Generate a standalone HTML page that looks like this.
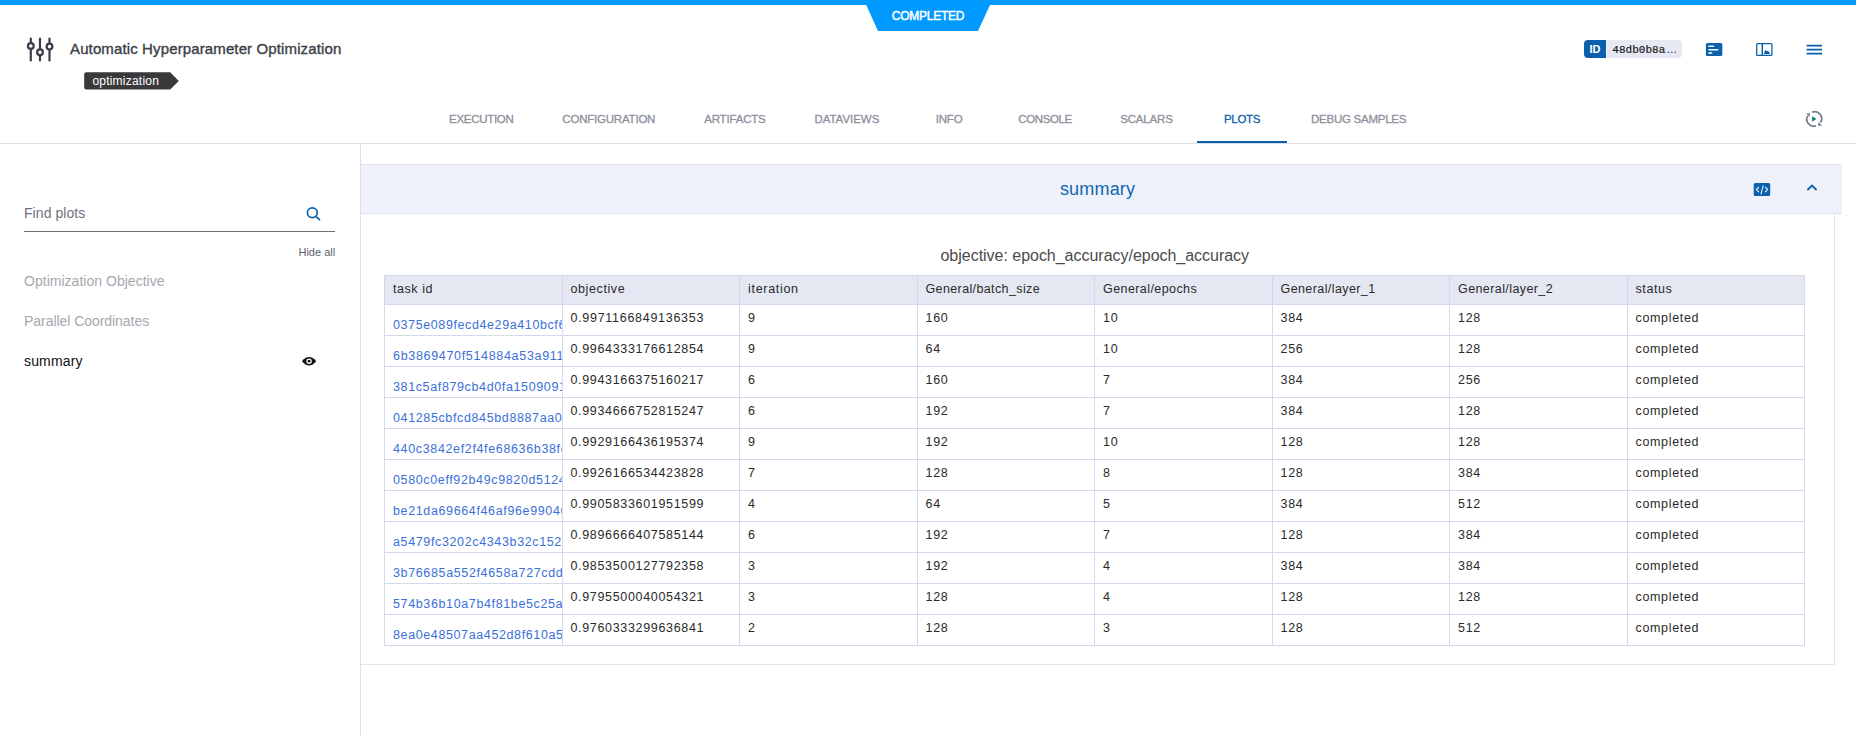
<!DOCTYPE html><html><head><meta charset="utf-8"><title>ClearML</title><style>
html,body{margin:0;padding:0;background:#fff}
body{width:1856px;height:736px;position:relative;overflow:hidden;font-family:"Liberation Sans",sans-serif}
.t{position:absolute;line-height:0;white-space:pre}
.t i{display:inline-block;height:30px;width:0}
.lk{overflow:hidden}
</style></head><body>
<div style="position:absolute;left:0;top:0;width:1856px;height:5px;background:#0099ff"></div>
<svg style="position:absolute;left:860px;top:0" width="140" height="34"><polygon points="6,4.5 130.2,4.5 118,31 18,31" fill="#0099ff"/></svg>
<svg style="position:absolute;left:22px;top:34px" width="36" height="32" viewBox="22 34 36 32" fill="none" stroke="#3a3e49" stroke-width="2.2" stroke-linecap="round">
<path d="M30.8 38.5V42.5M30.8 49.5V60.5M40 38.5V48.5M40 55.8V60.5M49.5 38.5V43M49.5 50.2V60.5"/>
<circle cx="30.8" cy="46" r="2.9"/><circle cx="40" cy="52.2" r="2.9"/><circle cx="49.5" cy="46.6" r="2.9"/></svg>
<svg style="position:absolute;left:80px;top:70px" width="104" height="22" viewBox="80 70 104 22"><path d="M86.2 72.2H170.2L178.8 80.9L170.2 89.6H86.2Q84.2 89.6 84.2 87.6V74.2Q84.2 72.2 86.2 72.2Z" fill="#3a3a3c"/></svg>
<svg style="position:absolute;left:1580px;top:36px" width="110" height="26" viewBox="1580 36 110 26"><path d="M1588 40H1606V58H1588Q1584 58 1584 54V44Q1584 40 1588 40Z" fill="#0a60ab"/><path d="M1606.5 40H1678Q1682 40 1682 44V54Q1682 58 1678 58H1606.5Z" fill="#e6e8f3"/></svg>
<svg style="position:absolute;left:1700px;top:38px" width="130" height="24" viewBox="1700 38 130 24">
<rect x="1705.9" y="43" width="16.4" height="13" rx="1.6" fill="#0a60ab"/>
<g stroke="#fff" stroke-width="1.5" stroke-linecap="round"><path d="M1708.9 46.3H1713.5M1708.9 49.8H1717.8M1708.9 53.1H1711.6"/></g>
<rect x="1756.7" y="43.7" width="15.2" height="11.6" rx="0.9" fill="none" stroke="#0a60ab" stroke-width="1.3"/>
<path d="M1762.3 43.7V55.3" stroke="#0a60ab" stroke-width="1.5"/>
<path d="M1764.2 54V52.2L1765.8 49.8L1767 51.6L1768 50.6L1769.8 53.2V54Z" fill="#0a60ab"/>
<g stroke="#0a60ab" stroke-width="1.6"><path d="M1806.6 45.6H1822M1806.6 49.6H1822M1806.6 53.6H1822"/></g>
</svg>
<div style="position:absolute;left:0;top:143px;width:1856px;height:1px;background:#dcdfea"></div>
<div style="position:absolute;left:1197px;top:141px;width:90px;height:2px;background:#0a60ab"></div>
<svg style="position:absolute;left:1802px;top:107px" width="24" height="24" viewBox="1802 107 24 24" fill="none">
<g stroke="#767a85" stroke-width="1.7" stroke-linecap="butt">
<path d="M1812.2 112.1A7 7 0 0 1 1820.4 122.6"/>
<path d="M1815.9 125.9A7 7 0 0 1 1807.8 115.6"/></g>
<path d="M1806.2 113.2H1809.8V116.9Z" fill="#767a85"/>
<path d="M1822 125.7H1818.2V121.9Z" fill="#767a85"/>
<path d="M1812.2 116.2L1816.3 119L1812.2 121.8Z" fill="#0e7a62"/></svg>
<div style="position:absolute;left:360px;top:144px;width:1px;height:592px;background:#dcdfea"></div>
<div style="position:absolute;left:24px;top:231px;width:311px;height:1px;background:#6b6f7a"></div>
<svg style="position:absolute;left:302px;top:203px" width="22" height="22" viewBox="302 203 22 22" fill="none" stroke="#0a60ab" stroke-width="1.7"><circle cx="312.3" cy="212.7" r="4.9"/><path d="M315.9 216.3L320 220.1" stroke-linecap="butt"/></svg>
<svg style="position:absolute;left:300px;top:354px" width="18" height="14" viewBox="300 354 18 14">
<path d="M302 361.2Q305.4 357 309.1 357Q312.8 357 316.2 361.2Q312.8 365.4 309.1 365.4Q305.4 365.4 302 361.2Z" fill="#111"/>
<circle cx="309.1" cy="361.2" r="2.7" fill="#fff"/><circle cx="309.1" cy="361.2" r="1.4" fill="#111"/></svg>
<div style="position:absolute;left:361px;top:164px;width:1481px;height:50px;background:#eff2fb;border-top:1px solid #e1e4ef;border-bottom:1px solid #e1e4ef;box-sizing:border-box"></div>
<svg style="position:absolute;left:1748px;top:178px" width="76" height="24" viewBox="1748 178 76 24" fill="none">
<rect x="1753.7" y="183" width="16.5" height="13.1" rx="1.6" fill="#0a60ab"/>
<g stroke="#e8eefa" stroke-width="1.1"><path d="M1758.9 187L1756.3 189.5L1758.9 192M1765.1 187L1767.7 189.5L1765.1 192M1763.3 185.3L1760.9 194.3"/></g>
<path d="M1807.4 190L1812 185.6L1816.6 190" stroke="#0a60ab" stroke-width="1.8"/></svg>
<div style="position:absolute;left:1834px;top:214px;width:1px;height:451px;background:#e1e4ef"></div>
<div style="position:absolute;left:361px;top:664px;width:1474px;height:1px;background:#e1e4ef"></div>
<div style="position:absolute;left:384.5px;top:275.5px;width:1420px;height:29px;background:#e5e8f2"></div>
<div style="position:absolute;left:384.0px;top:275px;width:1px;height:371px;background:#d6d9ec"></div>
<div style="position:absolute;left:561.5px;top:275px;width:1px;height:371px;background:#d6d9ec"></div>
<div style="position:absolute;left:739.0px;top:275px;width:1px;height:371px;background:#d6d9ec"></div>
<div style="position:absolute;left:916.5px;top:275px;width:1px;height:371px;background:#d6d9ec"></div>
<div style="position:absolute;left:1094.0px;top:275px;width:1px;height:371px;background:#d6d9ec"></div>
<div style="position:absolute;left:1271.5px;top:275px;width:1px;height:371px;background:#d6d9ec"></div>
<div style="position:absolute;left:1449.0px;top:275px;width:1px;height:371px;background:#d6d9ec"></div>
<div style="position:absolute;left:1626.5px;top:275px;width:1px;height:371px;background:#d6d9ec"></div>
<div style="position:absolute;left:1804.0px;top:275px;width:1px;height:371px;background:#d6d9ec"></div>
<div style="position:absolute;left:384px;top:275.0px;width:1421px;height:1px;background:#d6d9ec"></div>
<div style="position:absolute;left:384px;top:304.0px;width:1421px;height:1px;background:#d6d9ec"></div>
<div style="position:absolute;left:384px;top:335.0px;width:1421px;height:1px;background:#d6d9ec"></div>
<div style="position:absolute;left:384px;top:366.0px;width:1421px;height:1px;background:#d6d9ec"></div>
<div style="position:absolute;left:384px;top:397.0px;width:1421px;height:1px;background:#d6d9ec"></div>
<div style="position:absolute;left:384px;top:428.0px;width:1421px;height:1px;background:#d6d9ec"></div>
<div style="position:absolute;left:384px;top:459.0px;width:1421px;height:1px;background:#d6d9ec"></div>
<div style="position:absolute;left:384px;top:490.0px;width:1421px;height:1px;background:#d6d9ec"></div>
<div style="position:absolute;left:384px;top:521.0px;width:1421px;height:1px;background:#d6d9ec"></div>
<div style="position:absolute;left:384px;top:552.0px;width:1421px;height:1px;background:#d6d9ec"></div>
<div style="position:absolute;left:384px;top:583.0px;width:1421px;height:1px;background:#d6d9ec"></div>
<div style="position:absolute;left:384px;top:614.0px;width:1421px;height:1px;background:#d6d9ec"></div>
<div style="position:absolute;left:384px;top:645.0px;width:1421px;height:1px;background:#d6d9ec"></div>
<div id="t0" class="t" style="left:891.8px;top:-10px;font-family:'Liberation Sans',sans-serif;font-size:12px;font-weight:400;color:#fff;letter-spacing:-0.243px;-webkit-text-stroke:0.45px #fff;"><i></i>COMPLETED</div>
<div id="t1" class="t" style="left:70px;top:23.7px;font-family:'Liberation Sans',sans-serif;font-size:15px;font-weight:400;color:#3a3e49;letter-spacing:0.125px;-webkit-text-stroke:0.35px #3a3e49;"><i></i>Automatic Hyperparameter Optimization</div>
<div id="t2" class="t" style="left:92.4px;top:54.7px;font-family:'Liberation Sans',sans-serif;font-size:12px;font-weight:400;color:#fff;letter-spacing:0.220px;"><i></i>optimization</div>
<div id="t3" class="t" style="left:1589.5px;top:22.9px;font-family:'Liberation Sans',sans-serif;font-size:11px;font-weight:700;color:#fff;"><i></i>ID</div>
<div id="t4" class="t" style="left:1612.3px;top:22.9px;font-family:'Liberation Mono',monospace;font-size:11px;font-weight:400;color:#1a1a1a;letter-spacing:0.021px;-webkit-text-stroke:0.2px #1a1a1a;"><i></i>48db0b8a</div>
<div id="t5" class="t" style="left:1666.4px;top:22.9px;font-family:'Liberation Sans',sans-serif;font-size:10.5px;font-weight:400;color:#1a1a1a;"><i></i>…</div>
<div id="t6" class="t" style="left:449.1px;top:93.1px;font-family:'Liberation Sans',sans-serif;font-size:11.5px;font-weight:400;color:#8d909a;letter-spacing:-0.309px;-webkit-text-stroke:0.3px #8d909a;"><i></i>EXECUTION</div>
<div id="t7" class="t" style="left:562.3px;top:93.1px;font-family:'Liberation Sans',sans-serif;font-size:11.5px;font-weight:400;color:#8d909a;letter-spacing:-0.208px;-webkit-text-stroke:0.3px #8d909a;"><i></i>CONFIGURATION</div>
<div id="t8" class="t" style="left:704.2px;top:93.1px;font-family:'Liberation Sans',sans-serif;font-size:11.5px;font-weight:400;color:#8d909a;letter-spacing:-0.184px;-webkit-text-stroke:0.3px #8d909a;"><i></i>ARTIFACTS</div>
<div id="t9" class="t" style="left:814.4px;top:93.1px;font-family:'Liberation Sans',sans-serif;font-size:11.5px;font-weight:400;color:#8d909a;letter-spacing:-0.028px;-webkit-text-stroke:0.3px #8d909a;"><i></i>DATAVIEWS</div>
<div id="t10" class="t" style="left:935.7px;top:93.1px;font-family:'Liberation Sans',sans-serif;font-size:11.5px;font-weight:400;color:#8d909a;letter-spacing:-0.172px;-webkit-text-stroke:0.3px #8d909a;"><i></i>INFO</div>
<div id="t11" class="t" style="left:1018.3px;top:93.1px;font-family:'Liberation Sans',sans-serif;font-size:11.5px;font-weight:400;color:#8d909a;letter-spacing:-0.404px;-webkit-text-stroke:0.3px #8d909a;"><i></i>CONSOLE</div>
<div id="t12" class="t" style="left:1120.2px;top:93.1px;font-family:'Liberation Sans',sans-serif;font-size:11.5px;font-weight:400;color:#8d909a;letter-spacing:-0.179px;-webkit-text-stroke:0.3px #8d909a;"><i></i>SCALARS</div>
<div id="t13" class="t" style="left:1224px;top:93.1px;font-family:'Liberation Sans',sans-serif;font-size:11.5px;font-weight:400;color:#0a60ab;letter-spacing:-0.297px;-webkit-text-stroke:0.3px #0a60ab;"><i></i>PLOTS</div>
<div id="t14" class="t" style="left:1311px;top:93.1px;font-family:'Liberation Sans',sans-serif;font-size:11.5px;font-weight:400;color:#8d909a;letter-spacing:-0.255px;-webkit-text-stroke:0.3px #8d909a;"><i></i>DEBUG SAMPLES</div>
<div id="t15" class="t" style="left:24px;top:188px;font-family:'Liberation Sans',sans-serif;font-size:14px;font-weight:400;color:#6f727d;letter-spacing:0.061px;"><i></i>Find plots</div>
<div id="t16" class="t" style="left:298.5px;top:226px;font-family:'Liberation Sans',sans-serif;font-size:11px;font-weight:400;color:#5b5f6a;letter-spacing:-0.008px;"><i></i>Hide all</div>
<div id="t17" class="t" style="left:24px;top:256px;font-family:'Liberation Sans',sans-serif;font-size:14px;font-weight:400;color:#a5a8af;letter-spacing:0.024px;"><i></i>Optimization Objective</div>
<div id="t18" class="t" style="left:24px;top:296px;font-family:'Liberation Sans',sans-serif;font-size:14px;font-weight:400;color:#a5a8af;letter-spacing:-0.047px;"><i></i>Parallel Coordinates</div>
<div id="t19" class="t" style="left:24px;top:336px;font-family:'Liberation Sans',sans-serif;font-size:14px;font-weight:400;color:#111;letter-spacing:0.150px;"><i></i>summary</div>
<div id="t20" class="t" style="left:1059.9px;top:164.8px;font-family:'Liberation Sans',sans-serif;font-size:18px;font-weight:400;color:#0d67b1;letter-spacing:0.192px;"><i></i>summary</div>
<div id="t21" class="t" style="left:940.5px;top:230.5px;font-family:'Liberation Sans',sans-serif;font-size:16px;font-weight:400;color:#4b4b4b;letter-spacing:-0.024px;"><i></i>objective: epoch_accuracy/epoch_accuracy</div>
<div id="t22" class="t" style="left:393.0px;top:263px;font-family:'Liberation Sans',sans-serif;font-size:12.5px;font-weight:400;color:#2a2a2a;letter-spacing:0.556px;"><i></i>task id</div>
<div id="t23" class="t" style="left:570.5px;top:263px;font-family:'Liberation Sans',sans-serif;font-size:12.5px;font-weight:400;color:#2a2a2a;letter-spacing:0.606px;"><i></i>objective</div>
<div id="t24" class="t" style="left:748.0px;top:263px;font-family:'Liberation Sans',sans-serif;font-size:12.5px;font-weight:400;color:#2a2a2a;letter-spacing:0.691px;"><i></i>iteration</div>
<div id="t25" class="t" style="left:925.5px;top:263px;font-family:'Liberation Sans',sans-serif;font-size:12.5px;font-weight:400;color:#2a2a2a;letter-spacing:0.377px;"><i></i>General/batch_size</div>
<div id="t26" class="t" style="left:1103.0px;top:263px;font-family:'Liberation Sans',sans-serif;font-size:12.5px;font-weight:400;color:#2a2a2a;letter-spacing:0.420px;"><i></i>General/epochs</div>
<div id="t27" class="t" style="left:1280.5px;top:263px;font-family:'Liberation Sans',sans-serif;font-size:12.5px;font-weight:400;color:#2a2a2a;letter-spacing:0.408px;"><i></i>General/layer_1</div>
<div id="t28" class="t" style="left:1458.0px;top:263px;font-family:'Liberation Sans',sans-serif;font-size:12.5px;font-weight:400;color:#2a2a2a;letter-spacing:0.408px;"><i></i>General/layer_2</div>
<div id="t29" class="t" style="left:1635.5px;top:263px;font-family:'Liberation Sans',sans-serif;font-size:12.5px;font-weight:400;color:#2a2a2a;letter-spacing:0.586px;"><i></i>status</div>
<div id="t30" class="t lk" style="left:393.0px;top:298.5px;font-family:'Liberation Sans',sans-serif;font-size:12.5px;font-weight:400;color:#3b6fd9;letter-spacing:0.605px;width:168.5px;height:34px;"><i></i>0375e089fecd4e29a410bcf6c2d8e1a7</div>
<div id="t31" class="t" style="left:570.5px;top:291.8px;font-family:'Liberation Sans',sans-serif;font-size:12.5px;font-weight:400;color:#2a2a2a;letter-spacing:0.715px;"><i></i>0.9971166849136353</div>
<div id="t32" class="t" style="left:748.0px;top:291.8px;font-family:'Liberation Sans',sans-serif;font-size:12.5px;font-weight:400;color:#2a2a2a;"><i></i>9</div>
<div id="t33" class="t" style="left:925.5px;top:291.8px;font-family:'Liberation Sans',sans-serif;font-size:12.5px;font-weight:400;color:#2a2a2a;letter-spacing:0.682px;"><i></i>160</div>
<div id="t34" class="t" style="left:1103.0px;top:291.8px;font-family:'Liberation Sans',sans-serif;font-size:12.5px;font-weight:400;color:#2a2a2a;letter-spacing:0.688px;"><i></i>10</div>
<div id="t35" class="t" style="left:1280.5px;top:291.8px;font-family:'Liberation Sans',sans-serif;font-size:12.5px;font-weight:400;color:#2a2a2a;letter-spacing:0.682px;"><i></i>384</div>
<div id="t36" class="t" style="left:1458.0px;top:291.8px;font-family:'Liberation Sans',sans-serif;font-size:12.5px;font-weight:400;color:#2a2a2a;letter-spacing:0.682px;"><i></i>128</div>
<div id="t37" class="t" style="left:1635.5px;top:291.8px;font-family:'Liberation Sans',sans-serif;font-size:12.5px;font-weight:400;color:#2a2a2a;letter-spacing:0.665px;"><i></i>completed</div>
<div id="t38" class="t lk" style="left:393.0px;top:329.5px;font-family:'Liberation Sans',sans-serif;font-size:12.5px;font-weight:400;color:#3b6fd9;letter-spacing:0.679px;width:168.5px;height:34px;"><i></i>6b3869470f514884a53a911d7be20c4f</div>
<div id="t39" class="t" style="left:570.5px;top:322.8px;font-family:'Liberation Sans',sans-serif;font-size:12.5px;font-weight:400;color:#2a2a2a;letter-spacing:0.664px;"><i></i>0.9964333176612854</div>
<div id="t40" class="t" style="left:748.0px;top:322.8px;font-family:'Liberation Sans',sans-serif;font-size:12.5px;font-weight:400;color:#2a2a2a;"><i></i>9</div>
<div id="t41" class="t" style="left:925.5px;top:322.8px;font-family:'Liberation Sans',sans-serif;font-size:12.5px;font-weight:400;color:#2a2a2a;letter-spacing:0.688px;"><i></i>64</div>
<div id="t42" class="t" style="left:1103.0px;top:322.8px;font-family:'Liberation Sans',sans-serif;font-size:12.5px;font-weight:400;color:#2a2a2a;letter-spacing:0.688px;"><i></i>10</div>
<div id="t43" class="t" style="left:1280.5px;top:322.8px;font-family:'Liberation Sans',sans-serif;font-size:12.5px;font-weight:400;color:#2a2a2a;letter-spacing:0.682px;"><i></i>256</div>
<div id="t44" class="t" style="left:1458.0px;top:322.8px;font-family:'Liberation Sans',sans-serif;font-size:12.5px;font-weight:400;color:#2a2a2a;letter-spacing:0.682px;"><i></i>128</div>
<div id="t45" class="t" style="left:1635.5px;top:322.8px;font-family:'Liberation Sans',sans-serif;font-size:12.5px;font-weight:400;color:#2a2a2a;letter-spacing:0.665px;"><i></i>completed</div>
<div id="t46" class="t lk" style="left:393.0px;top:360.5px;font-family:'Liberation Sans',sans-serif;font-size:12.5px;font-weight:400;color:#3b6fd9;letter-spacing:0.628px;width:168.5px;height:34px;"><i></i>381c5af879cb4d0fa150909187c3e2bd</div>
<div id="t47" class="t" style="left:570.5px;top:353.8px;font-family:'Liberation Sans',sans-serif;font-size:12.5px;font-weight:400;color:#2a2a2a;letter-spacing:0.664px;"><i></i>0.9943166375160217</div>
<div id="t48" class="t" style="left:748.0px;top:353.8px;font-family:'Liberation Sans',sans-serif;font-size:12.5px;font-weight:400;color:#2a2a2a;"><i></i>6</div>
<div id="t49" class="t" style="left:925.5px;top:353.8px;font-family:'Liberation Sans',sans-serif;font-size:12.5px;font-weight:400;color:#2a2a2a;letter-spacing:0.682px;"><i></i>160</div>
<div id="t50" class="t" style="left:1103.0px;top:353.8px;font-family:'Liberation Sans',sans-serif;font-size:12.5px;font-weight:400;color:#2a2a2a;"><i></i>7</div>
<div id="t51" class="t" style="left:1280.5px;top:353.8px;font-family:'Liberation Sans',sans-serif;font-size:12.5px;font-weight:400;color:#2a2a2a;letter-spacing:0.682px;"><i></i>384</div>
<div id="t52" class="t" style="left:1458.0px;top:353.8px;font-family:'Liberation Sans',sans-serif;font-size:12.5px;font-weight:400;color:#2a2a2a;letter-spacing:0.682px;"><i></i>256</div>
<div id="t53" class="t" style="left:1635.5px;top:353.8px;font-family:'Liberation Sans',sans-serif;font-size:12.5px;font-weight:400;color:#2a2a2a;letter-spacing:0.665px;"><i></i>completed</div>
<div id="t54" class="t lk" style="left:393.0px;top:391.5px;font-family:'Liberation Sans',sans-serif;font-size:12.5px;font-weight:400;color:#3b6fd9;letter-spacing:0.627px;width:168.5px;height:34px;"><i></i>041285cbfcd845bd8887aa08d1f3c6e9</div>
<div id="t55" class="t" style="left:570.5px;top:384.8px;font-family:'Liberation Sans',sans-serif;font-size:12.5px;font-weight:400;color:#2a2a2a;letter-spacing:0.664px;"><i></i>0.9934666752815247</div>
<div id="t56" class="t" style="left:748.0px;top:384.8px;font-family:'Liberation Sans',sans-serif;font-size:12.5px;font-weight:400;color:#2a2a2a;"><i></i>6</div>
<div id="t57" class="t" style="left:925.5px;top:384.8px;font-family:'Liberation Sans',sans-serif;font-size:12.5px;font-weight:400;color:#2a2a2a;letter-spacing:0.682px;"><i></i>192</div>
<div id="t58" class="t" style="left:1103.0px;top:384.8px;font-family:'Liberation Sans',sans-serif;font-size:12.5px;font-weight:400;color:#2a2a2a;"><i></i>7</div>
<div id="t59" class="t" style="left:1280.5px;top:384.8px;font-family:'Liberation Sans',sans-serif;font-size:12.5px;font-weight:400;color:#2a2a2a;letter-spacing:0.682px;"><i></i>384</div>
<div id="t60" class="t" style="left:1458.0px;top:384.8px;font-family:'Liberation Sans',sans-serif;font-size:12.5px;font-weight:400;color:#2a2a2a;letter-spacing:0.682px;"><i></i>128</div>
<div id="t61" class="t" style="left:1635.5px;top:384.8px;font-family:'Liberation Sans',sans-serif;font-size:12.5px;font-weight:400;color:#2a2a2a;letter-spacing:0.665px;"><i></i>completed</div>
<div id="t62" class="t lk" style="left:393.0px;top:422.5px;font-family:'Liberation Sans',sans-serif;font-size:12.5px;font-weight:400;color:#3b6fd9;letter-spacing:0.645px;width:168.5px;height:34px;"><i></i>440c3842ef2f4fe68636b38fc51a9d07</div>
<div id="t63" class="t" style="left:570.5px;top:415.8px;font-family:'Liberation Sans',sans-serif;font-size:12.5px;font-weight:400;color:#2a2a2a;letter-spacing:0.664px;"><i></i>0.9929166436195374</div>
<div id="t64" class="t" style="left:748.0px;top:415.8px;font-family:'Liberation Sans',sans-serif;font-size:12.5px;font-weight:400;color:#2a2a2a;"><i></i>9</div>
<div id="t65" class="t" style="left:925.5px;top:415.8px;font-family:'Liberation Sans',sans-serif;font-size:12.5px;font-weight:400;color:#2a2a2a;letter-spacing:0.682px;"><i></i>192</div>
<div id="t66" class="t" style="left:1103.0px;top:415.8px;font-family:'Liberation Sans',sans-serif;font-size:12.5px;font-weight:400;color:#2a2a2a;letter-spacing:0.688px;"><i></i>10</div>
<div id="t67" class="t" style="left:1280.5px;top:415.8px;font-family:'Liberation Sans',sans-serif;font-size:12.5px;font-weight:400;color:#2a2a2a;letter-spacing:0.682px;"><i></i>128</div>
<div id="t68" class="t" style="left:1458.0px;top:415.8px;font-family:'Liberation Sans',sans-serif;font-size:12.5px;font-weight:400;color:#2a2a2a;letter-spacing:0.682px;"><i></i>128</div>
<div id="t69" class="t" style="left:1635.5px;top:415.8px;font-family:'Liberation Sans',sans-serif;font-size:12.5px;font-weight:400;color:#2a2a2a;letter-spacing:0.665px;"><i></i>completed</div>
<div id="t70" class="t lk" style="left:393.0px;top:453.5px;font-family:'Liberation Sans',sans-serif;font-size:12.5px;font-weight:400;color:#3b6fd9;letter-spacing:0.631px;width:168.5px;height:34px;"><i></i>0580c0eff92b49c9820d51246ab7e3c1</div>
<div id="t71" class="t" style="left:570.5px;top:446.8px;font-family:'Liberation Sans',sans-serif;font-size:12.5px;font-weight:400;color:#2a2a2a;letter-spacing:0.664px;"><i></i>0.9926166534423828</div>
<div id="t72" class="t" style="left:748.0px;top:446.8px;font-family:'Liberation Sans',sans-serif;font-size:12.5px;font-weight:400;color:#2a2a2a;"><i></i>7</div>
<div id="t73" class="t" style="left:925.5px;top:446.8px;font-family:'Liberation Sans',sans-serif;font-size:12.5px;font-weight:400;color:#2a2a2a;letter-spacing:0.682px;"><i></i>128</div>
<div id="t74" class="t" style="left:1103.0px;top:446.8px;font-family:'Liberation Sans',sans-serif;font-size:12.5px;font-weight:400;color:#2a2a2a;"><i></i>8</div>
<div id="t75" class="t" style="left:1280.5px;top:446.8px;font-family:'Liberation Sans',sans-serif;font-size:12.5px;font-weight:400;color:#2a2a2a;letter-spacing:0.682px;"><i></i>128</div>
<div id="t76" class="t" style="left:1458.0px;top:446.8px;font-family:'Liberation Sans',sans-serif;font-size:12.5px;font-weight:400;color:#2a2a2a;letter-spacing:0.682px;"><i></i>384</div>
<div id="t77" class="t" style="left:1635.5px;top:446.8px;font-family:'Liberation Sans',sans-serif;font-size:12.5px;font-weight:400;color:#2a2a2a;letter-spacing:0.665px;"><i></i>completed</div>
<div id="t78" class="t lk" style="left:393.0px;top:484.5px;font-family:'Liberation Sans',sans-serif;font-size:12.5px;font-weight:400;color:#3b6fd9;letter-spacing:0.632px;width:168.5px;height:34px;"><i></i>be21da69664f46af96e99046d2c8b7a5</div>
<div id="t79" class="t" style="left:570.5px;top:477.8px;font-family:'Liberation Sans',sans-serif;font-size:12.5px;font-weight:400;color:#2a2a2a;letter-spacing:0.664px;"><i></i>0.9905833601951599</div>
<div id="t80" class="t" style="left:748.0px;top:477.8px;font-family:'Liberation Sans',sans-serif;font-size:12.5px;font-weight:400;color:#2a2a2a;"><i></i>4</div>
<div id="t81" class="t" style="left:925.5px;top:477.8px;font-family:'Liberation Sans',sans-serif;font-size:12.5px;font-weight:400;color:#2a2a2a;letter-spacing:0.688px;"><i></i>64</div>
<div id="t82" class="t" style="left:1103.0px;top:477.8px;font-family:'Liberation Sans',sans-serif;font-size:12.5px;font-weight:400;color:#2a2a2a;"><i></i>5</div>
<div id="t83" class="t" style="left:1280.5px;top:477.8px;font-family:'Liberation Sans',sans-serif;font-size:12.5px;font-weight:400;color:#2a2a2a;letter-spacing:0.682px;"><i></i>384</div>
<div id="t84" class="t" style="left:1458.0px;top:477.8px;font-family:'Liberation Sans',sans-serif;font-size:12.5px;font-weight:400;color:#2a2a2a;letter-spacing:0.682px;"><i></i>512</div>
<div id="t85" class="t" style="left:1635.5px;top:477.8px;font-family:'Liberation Sans',sans-serif;font-size:12.5px;font-weight:400;color:#2a2a2a;letter-spacing:0.665px;"><i></i>completed</div>
<div id="t86" class="t lk" style="left:393.0px;top:515.5px;font-family:'Liberation Sans',sans-serif;font-size:12.5px;font-weight:400;color:#3b6fd9;letter-spacing:0.637px;width:168.5px;height:34px;"><i></i>a5479fc3202c4343b32c1529e8d6f0b4</div>
<div id="t87" class="t" style="left:570.5px;top:508.8px;font-family:'Liberation Sans',sans-serif;font-size:12.5px;font-weight:400;color:#2a2a2a;letter-spacing:0.664px;"><i></i>0.9896666407585144</div>
<div id="t88" class="t" style="left:748.0px;top:508.8px;font-family:'Liberation Sans',sans-serif;font-size:12.5px;font-weight:400;color:#2a2a2a;"><i></i>6</div>
<div id="t89" class="t" style="left:925.5px;top:508.8px;font-family:'Liberation Sans',sans-serif;font-size:12.5px;font-weight:400;color:#2a2a2a;letter-spacing:0.682px;"><i></i>192</div>
<div id="t90" class="t" style="left:1103.0px;top:508.8px;font-family:'Liberation Sans',sans-serif;font-size:12.5px;font-weight:400;color:#2a2a2a;"><i></i>7</div>
<div id="t91" class="t" style="left:1280.5px;top:508.8px;font-family:'Liberation Sans',sans-serif;font-size:12.5px;font-weight:400;color:#2a2a2a;letter-spacing:0.682px;"><i></i>128</div>
<div id="t92" class="t" style="left:1458.0px;top:508.8px;font-family:'Liberation Sans',sans-serif;font-size:12.5px;font-weight:400;color:#2a2a2a;letter-spacing:0.682px;"><i></i>384</div>
<div id="t93" class="t" style="left:1635.5px;top:508.8px;font-family:'Liberation Sans',sans-serif;font-size:12.5px;font-weight:400;color:#2a2a2a;letter-spacing:0.665px;"><i></i>completed</div>
<div id="t94" class="t lk" style="left:393.0px;top:546.5px;font-family:'Liberation Sans',sans-serif;font-size:12.5px;font-weight:400;color:#3b6fd9;letter-spacing:0.639px;width:168.5px;height:34px;"><i></i>3b76685a552f4658a727cddb91e4c3f0</div>
<div id="t95" class="t" style="left:570.5px;top:539.8px;font-family:'Liberation Sans',sans-serif;font-size:12.5px;font-weight:400;color:#2a2a2a;letter-spacing:0.664px;"><i></i>0.9853500127792358</div>
<div id="t96" class="t" style="left:748.0px;top:539.8px;font-family:'Liberation Sans',sans-serif;font-size:12.5px;font-weight:400;color:#2a2a2a;"><i></i>3</div>
<div id="t97" class="t" style="left:925.5px;top:539.8px;font-family:'Liberation Sans',sans-serif;font-size:12.5px;font-weight:400;color:#2a2a2a;letter-spacing:0.682px;"><i></i>192</div>
<div id="t98" class="t" style="left:1103.0px;top:539.8px;font-family:'Liberation Sans',sans-serif;font-size:12.5px;font-weight:400;color:#2a2a2a;"><i></i>4</div>
<div id="t99" class="t" style="left:1280.5px;top:539.8px;font-family:'Liberation Sans',sans-serif;font-size:12.5px;font-weight:400;color:#2a2a2a;letter-spacing:0.682px;"><i></i>384</div>
<div id="t100" class="t" style="left:1458.0px;top:539.8px;font-family:'Liberation Sans',sans-serif;font-size:12.5px;font-weight:400;color:#2a2a2a;letter-spacing:0.682px;"><i></i>384</div>
<div id="t101" class="t" style="left:1635.5px;top:539.8px;font-family:'Liberation Sans',sans-serif;font-size:12.5px;font-weight:400;color:#2a2a2a;letter-spacing:0.665px;"><i></i>completed</div>
<div id="t102" class="t lk" style="left:393.0px;top:577.5px;font-family:'Liberation Sans',sans-serif;font-size:12.5px;font-weight:400;color:#3b6fd9;letter-spacing:0.630px;width:168.5px;height:34px;"><i></i>574b36b10a7b4f81be5c25a9d3e7f6c8</div>
<div id="t103" class="t" style="left:570.5px;top:570.8px;font-family:'Liberation Sans',sans-serif;font-size:12.5px;font-weight:400;color:#2a2a2a;letter-spacing:0.664px;"><i></i>0.9795500040054321</div>
<div id="t104" class="t" style="left:748.0px;top:570.8px;font-family:'Liberation Sans',sans-serif;font-size:12.5px;font-weight:400;color:#2a2a2a;"><i></i>3</div>
<div id="t105" class="t" style="left:925.5px;top:570.8px;font-family:'Liberation Sans',sans-serif;font-size:12.5px;font-weight:400;color:#2a2a2a;letter-spacing:0.682px;"><i></i>128</div>
<div id="t106" class="t" style="left:1103.0px;top:570.8px;font-family:'Liberation Sans',sans-serif;font-size:12.5px;font-weight:400;color:#2a2a2a;"><i></i>4</div>
<div id="t107" class="t" style="left:1280.5px;top:570.8px;font-family:'Liberation Sans',sans-serif;font-size:12.5px;font-weight:400;color:#2a2a2a;letter-spacing:0.682px;"><i></i>128</div>
<div id="t108" class="t" style="left:1458.0px;top:570.8px;font-family:'Liberation Sans',sans-serif;font-size:12.5px;font-weight:400;color:#2a2a2a;letter-spacing:0.682px;"><i></i>128</div>
<div id="t109" class="t" style="left:1635.5px;top:570.8px;font-family:'Liberation Sans',sans-serif;font-size:12.5px;font-weight:400;color:#2a2a2a;letter-spacing:0.665px;"><i></i>completed</div>
<div id="t110" class="t lk" style="left:393.0px;top:608.5px;font-family:'Liberation Sans',sans-serif;font-size:12.5px;font-weight:400;color:#3b6fd9;letter-spacing:0.616px;width:168.5px;height:34px;"><i></i>8ea0e48507aa452d8f610a5c7b3d9e2f</div>
<div id="t111" class="t" style="left:570.5px;top:601.8px;font-family:'Liberation Sans',sans-serif;font-size:12.5px;font-weight:400;color:#2a2a2a;letter-spacing:0.664px;"><i></i>0.9760333299636841</div>
<div id="t112" class="t" style="left:748.0px;top:601.8px;font-family:'Liberation Sans',sans-serif;font-size:12.5px;font-weight:400;color:#2a2a2a;"><i></i>2</div>
<div id="t113" class="t" style="left:925.5px;top:601.8px;font-family:'Liberation Sans',sans-serif;font-size:12.5px;font-weight:400;color:#2a2a2a;letter-spacing:0.682px;"><i></i>128</div>
<div id="t114" class="t" style="left:1103.0px;top:601.8px;font-family:'Liberation Sans',sans-serif;font-size:12.5px;font-weight:400;color:#2a2a2a;"><i></i>3</div>
<div id="t115" class="t" style="left:1280.5px;top:601.8px;font-family:'Liberation Sans',sans-serif;font-size:12.5px;font-weight:400;color:#2a2a2a;letter-spacing:0.682px;"><i></i>128</div>
<div id="t116" class="t" style="left:1458.0px;top:601.8px;font-family:'Liberation Sans',sans-serif;font-size:12.5px;font-weight:400;color:#2a2a2a;letter-spacing:0.682px;"><i></i>512</div>
<div id="t117" class="t" style="left:1635.5px;top:601.8px;font-family:'Liberation Sans',sans-serif;font-size:12.5px;font-weight:400;color:#2a2a2a;letter-spacing:0.665px;"><i></i>completed</div>
</body></html>
